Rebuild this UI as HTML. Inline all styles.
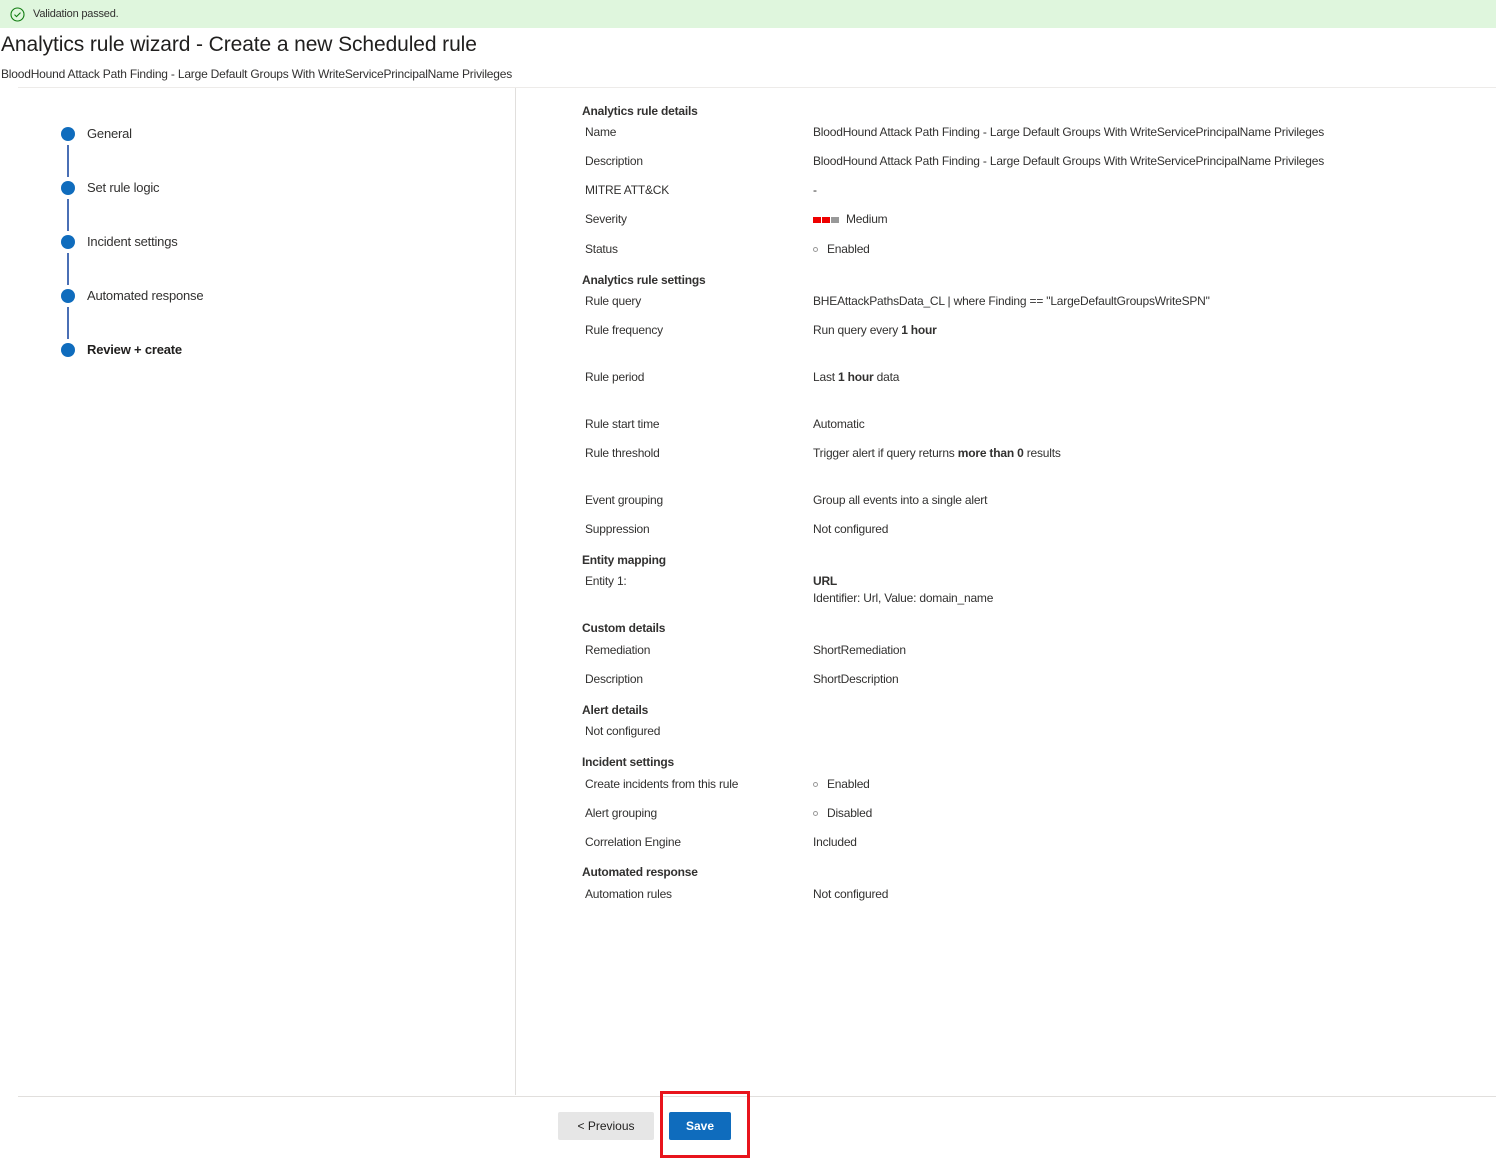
<!DOCTYPE html>
<html><head><meta charset="utf-8"><style>
*{margin:0;padding:0;box-sizing:border-box}
body{width:1496px;height:1158px;background:#fff;position:relative;font-family:"Liberation Sans",sans-serif;color:#323130;overflow:hidden}
.t{position:absolute;font-size:12px;line-height:14px;white-space:nowrap;letter-spacing:-0.2px}
.h{font-weight:bold;color:#323130}
.l{left:585px}
.v{left:813px}
.s{left:87px;font-size:13px;line-height:16px}
.dot{position:absolute;left:61px;width:14px;height:14px;border-radius:50%;background:#0f6cbd}
.ln{position:absolute;left:67px;width:1.5px;height:32px;background:#4a6fb5}
.ring{display:inline-block;width:5px;height:5px;border:1px solid #999;border-radius:50%;margin-right:9px;vertical-align:1px}
b{font-weight:bold}
.sq{display:inline-block;width:8px;height:6px;margin-right:1px;vertical-align:0}
</style></head><body>
<div style="position:absolute;left:0;top:0;width:1496px;height:28px;background:#dff6dd"></div>
<svg style="position:absolute;left:10px;top:7px" width="15" height="15" viewBox="0 0 15 15"><circle cx="7.5" cy="7.5" r="6.5" fill="none" stroke="#107c10" stroke-width="1.1"/><path d="M4.5 7.6l2 2 4-4" fill="none" stroke="#107c10" stroke-width="1.1"/></svg>
<div class="t" style="left:33px;top:7px;font-size:11px">Validation passed.</div>
<div class="t" style="left:1px;top:31px;font-size:21px;line-height:28px;color:#201f1e;letter-spacing:-0.1px">Analytics rule wizard - Create a new Scheduled rule</div>
<div class="t" style="left:1px;top:67px">BloodHound Attack Path Finding - Large Default Groups With WriteServicePrincipalName Privileges</div>
<div style="position:absolute;left:18px;top:87px;width:1478px;height:1px;background:#edebe9"></div>
<div style="position:absolute;left:515px;top:88px;width:1px;height:1007px;background:#e1dfdd"></div>
<div style="position:absolute;left:18px;top:1096px;width:1478px;height:1px;background:#e1dfdd"></div>

<div class="dot" style="top:127px"></div><div class="ln" style="top:145px"></div>
<div class="dot" style="top:181px"></div><div class="ln" style="top:199px"></div>
<div class="dot" style="top:235px"></div><div class="ln" style="top:253px"></div>
<div class="dot" style="top:289px"></div><div class="ln" style="top:307px"></div>
<div class="dot" style="top:343px"></div>
<div class="t s" style="top:126px">General</div>
<div class="t s" style="top:180px">Set rule logic</div>
<div class="t s" style="top:234px">Incident settings</div>
<div class="t s" style="top:288px">Automated response</div>
<div class="t s" style="top:342px;font-weight:bold;color:#201f1e">Review + create</div>

<div class="t h" style="left:582px;top:104px">Analytics rule details</div>
<div class="t l" style="top:125px">Name</div><div class="t v" style="top:125px">BloodHound Attack Path Finding - Large Default Groups With WriteServicePrincipalName Privileges</div>
<div class="t l" style="top:154px">Description</div><div class="t v" style="top:154px">BloodHound Attack Path Finding - Large Default Groups With WriteServicePrincipalName Privileges</div>
<div class="t l" style="top:183px">MITRE ATT&amp;CK</div><div class="t v" style="top:183px">-</div>
<div class="t l" style="top:212px">Severity</div>
<div class="t v" style="top:212px"><span class="sq" style="background:#e00"></span><span class="sq" style="background:#e00"></span><span class="sq" style="background:#999;margin-right:7px"></span>Medium</div>
<div class="t l" style="top:242px">Status</div><div class="t v" style="top:242px"><span class="ring"></span>Enabled</div>

<div class="t h" style="left:582px;top:273px">Analytics rule settings</div>
<div class="t l" style="top:294px">Rule query</div><div class="t v" style="top:294px">BHEAttackPathsData_CL | where Finding == "LargeDefaultGroupsWriteSPN"</div>
<div class="t l" style="top:323px">Rule frequency</div><div class="t v" style="top:323px">Run query every <b>1 hour</b></div>
<div class="t l" style="top:370px">Rule period</div><div class="t v" style="top:370px">Last <b>1 hour</b> data</div>
<div class="t l" style="top:417px">Rule start time</div><div class="t v" style="top:417px">Automatic</div>
<div class="t l" style="top:446px">Rule threshold</div><div class="t v" style="top:446px">Trigger alert if query returns <b>more than 0</b> results</div>
<div class="t l" style="top:493px">Event grouping</div><div class="t v" style="top:493px">Group all events into a single alert</div>
<div class="t l" style="top:522px">Suppression</div><div class="t v" style="top:522px">Not configured</div>

<div class="t h" style="left:582px;top:553px">Entity mapping</div>
<div class="t l" style="top:574px">Entity 1:</div><div class="t v h" style="top:574px">URL</div>
<div class="t v" style="top:591px">Identifier: Url, Value: domain_name</div>

<div class="t h" style="left:582px;top:621px">Custom details</div>
<div class="t l" style="top:643px">Remediation</div><div class="t v" style="top:643px">ShortRemediation</div>
<div class="t l" style="top:672px">Description</div><div class="t v" style="top:672px">ShortDescription</div>

<div class="t h" style="left:582px;top:703px">Alert details</div>
<div class="t l" style="top:724px">Not configured</div>

<div class="t h" style="left:582px;top:755px">Incident settings</div>
<div class="t l" style="top:777px">Create incidents from this rule</div><div class="t v" style="top:777px"><span class="ring"></span>Enabled</div>
<div class="t l" style="top:806px">Alert grouping</div><div class="t v" style="top:806px"><span class="ring"></span>Disabled</div>
<div class="t l" style="top:835px">Correlation Engine</div><div class="t v" style="top:835px">Included</div>

<div class="t h" style="left:582px;top:865px">Automated response</div>
<div class="t l" style="top:887px">Automation rules</div><div class="t v" style="top:887px">Not configured</div>

<div style="position:absolute;left:558px;top:1112px;width:96px;height:28px;background:#e6e6e6;border-radius:2px;font-size:12px;line-height:28px;text-align:center;color:#201f1e">&lt; Previous</div>
<div style="position:absolute;left:669px;top:1112px;width:62px;height:28px;background:#0f6cbd;border-radius:2px;font-size:12px;line-height:28px;text-align:center;color:#fff;font-weight:bold">Save</div>
<div style="position:absolute;left:660px;top:1091px;width:90px;height:67px;border:3px solid #e8141c"></div>
</body></html>
